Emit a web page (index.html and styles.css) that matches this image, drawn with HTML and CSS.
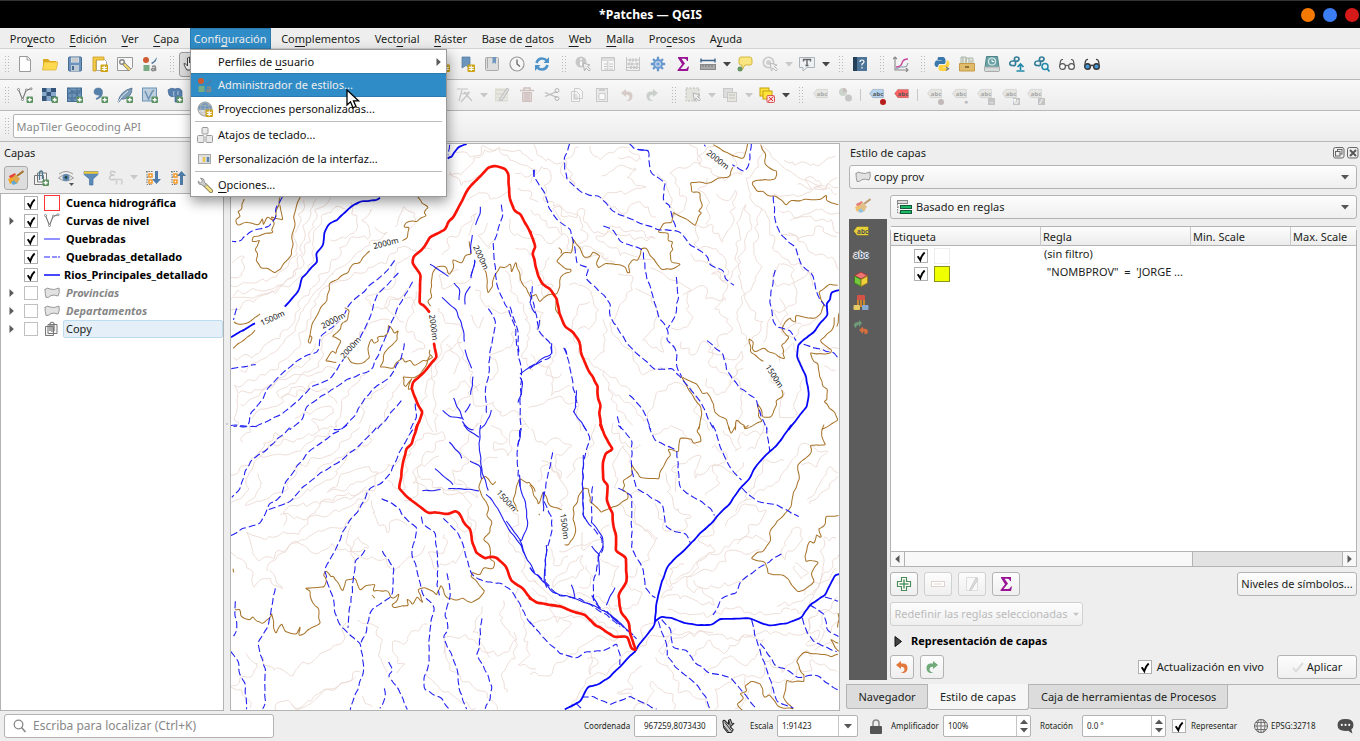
FILE: index.html
```html
<!DOCTYPE html>
<html lang="es">
<head>
<meta charset="utf-8">
<title>*Patches — QGIS</title>
<link rel="stylesheet" href="styles.css">
</head>
<body>
<svg class="defs" width="0" height="0" aria-hidden="true">
  <symbol id="new" viewBox="0 0 16 16"><path d="M2.500.5h8l3 3v12h-11z" fill="#fff" stroke="#999"/><path d="M10 .5V4h3.500" fill="none" stroke="#999"/></symbol>
  <symbol id="open" viewBox="0 0 16 16"><path d="M1 3h5l2 2h6v9H1z" fill="#dba91b"/><path d="M2 6h14l-2 8H.5z" fill="#fcd94f" stroke="#dcae2b" stroke-width=".7"/></symbol>
  <symbol id="save" viewBox="0 0 16 16"><rect x="1.500" y="1" width="13" height="14" rx="1" fill="#6b93bd" stroke="#456b91"/><rect x="4" y="1.500" width="8" height="5" fill="#e9edf1"/><path d="M4.500 3h7M4.500 5h7" stroke="#aaa"/><rect x="4" y="9" width="8" height="6" fill="#bdc9d4"/><path d="M6 10v4" stroke="#456b91" stroke-width="2"/></symbol>
  <symbol id="gold" viewBox="0 0 16 16"><rect x="8.500" y="8.500" width="7.500" height="7.500" rx="1" fill="#cda215"/><path d="M12.200 9.500v5.500M9.800 11l5 2.600M9.800 13.600l5-2.600" stroke="#fff" stroke-width="1.100"/></symbol>
  <symbol id="layout" viewBox="0 0 16 16"><path d="M4.500 3.500h8l2 2v9h-10z" fill="#fff" stroke="#aaa"/><path d="M1 1h11v3H4v11H1z" fill="#f4cc4c" stroke="#c99a1d" stroke-width=".8"/><use href="#gold"/></symbol>
  <symbol id="layoutmgr" viewBox="0 0 16 16"><path d="M.5 1.500h15v10l-3 3H.5z" fill="#f7f7f7" stroke="#999"/><path d="M6 7l7 7" stroke="#777" stroke-width="3.200"/><path d="M6 7l7 7" stroke="#f5d76a" stroke-width="2"/><circle cx="5" cy="6" r="2.300" fill="none" stroke="#888" stroke-width="1.400"/></symbol>
  <symbol id="style" viewBox="0 0 16 16"><circle cx="4" cy="4" r="3" fill="#cf5b31"/><path d="M15 1l-3 4-3 2 1.500 1L14 5z" fill="#51799e"/><rect x="1.500" y="9" width="6" height="6" fill="#79ab82"/><path d="M10 10.500q3.500-1.500 3.500 1V15M13.500 12.500q-4-.5-4 1.200 1.500 2.500 4-.4" fill="none" stroke="#888" stroke-width="1.500"/></symbol>
  <symbol id="globe" viewBox="0 0 16 16"><circle cx="8" cy="8" r="7" fill="#ddd" stroke="#999"/><path d="M1.500 6q6.500-9 13 0v3h-13z" fill="#7195b8"/><path d="M1 8h14M8 1v14M3 4q5 2 10 0M3 12q5-2 10 0M6 1.500q-5 6.500 0 13M10 1.500q5 6.500 0 13" fill="none" stroke="#bbb" stroke-width=".6"/></symbol>
  <symbol id="globegold" viewBox="0 0 16 16"><use href="#globe"/><use href="#gold"/></symbol>
  <symbol id="keys" viewBox="0 0 16 16"><g fill="#e9e9e9" stroke="#999"><rect x="5" y=".5" width="6" height="6.500" rx="1"/><rect x=".5" y="8.500" width="6.500" height="7" rx="1"/><rect x="9" y="8.500" width="6.500" height="7" rx="1"/></g></symbol>
  <symbol id="panel" viewBox="0 0 16 16"><rect x="1.500" y="3.500" width="12" height="9" fill="#ddd" stroke="#aaa"/><path d="M3.500 6v5" stroke="#eee" stroke-width="2"/><path d="M7 6v5" stroke="#ecc94d" stroke-width="2.500"/><path d="M11 6v5" stroke="#5b85ad" stroke-width="2.500"/></symbol>
  <symbol id="wrench" viewBox="0 0 16 16"><path d="M8 8l6 6" stroke="#76704c" stroke-width="4" stroke-linecap="round"/><path d="M8 8l6 6" stroke="#f1df85" stroke-width="2.500" stroke-linecap="round"/><path d="M1 4q0 4 4 4l3 1.500L9.500 8 7.500 5q0-4-4-4l2 3-2 2z" fill="#ccc" stroke="#888" stroke-width=".8"/></symbol>
  <symbol id="plusb" viewBox="0 0 16 16"><rect x="9.500" y="9.500" width="6.500" height="6.500" rx="1" fill="#5c9262"/><path d="M12.750 10.700v4M10.700 12.750h4" stroke="#fff" stroke-width="1.300"/></symbol>
  <symbol id="vec" viewBox="0 0 16 16"><path d="M1.500 2.500l4 10L9 3.500l4-1.500" fill="none" stroke="#777" stroke-width="1.100"/><g fill="#fff" stroke="#888"><circle cx="1.500" cy="2.500" r="1"/><circle cx="5.500" cy="12.500" r="1"/><circle cx="9.500" cy="3" r="1"/><circle cx="14" cy="1.800" r="1"/></g></symbol>
  <symbol id="vecadd" viewBox="0 0 16 16"><use href="#vec"/><use href="#plusb"/></symbol>
  <symbol id="raster" viewBox="0 0 16 16"><rect x="0" y="1" width="14" height="13" fill="#34567a"/><path d="M4.500 1H9v4H4.500zM9 5h5v4H9zM0 5h4.500v4H0zM4.500 9H9v5H4.500z" fill="#88a9ca"/><use href="#plusb"/></symbol>
  <symbol id="mesh" viewBox="0 0 16 16"><rect x=".5" y="1" width="14" height="13.500" fill="#7096bb" stroke="#446b91"/><path d="M.5 9L5 4l5 4 4.500-7M.5 9l5 5.500L10 8l4.500 4M1 1l4 3h9M0 6h14M0 11h14M5 4v10M10 1v7" fill="none" stroke="#446b91" stroke-width=".8"/><use href="#plusb"/></symbol>
  <symbol id="comma" viewBox="0 0 16 16"><path d="M2 5q0-4 4.500-4 4 0 4 4.500 0 5-6 7l-.5-1Q7.500 10 7.500 8 2 8.500 2 5z" fill="#5580aa" stroke="#426b94" stroke-width=".5"/><use href="#plusb"/></symbol>
  <symbol id="feather" viewBox="0 0 16 16"><path d="M1 15Q3 4 15 1q0 9-8 11H4l-2 3z" fill="#7e9db9" stroke="#47688a" stroke-width=".8"/><path d="M1 15q4-7 10-11" fill="none" stroke="#e9eef3"/><use href="#plusb"/></symbol>
  <symbol id="virt" viewBox="0 0 16 16"><rect x=".5" y="1" width="14" height="13" fill="#bdcfdf" stroke="#6d91b1"/><path d="M3 4l3.500 8L10 5l2-2" fill="none" stroke="#6d91b1" stroke-width="1.500"/><use href="#plusb"/></symbol>
  <symbol id="pg" viewBox="0 0 16 16"><path d="M1 3q3-3 7-1 5-2 7 2v5l-3 2-1 4H8V9q-4 2-6-1z" fill="#557fae" stroke="#3d638e" stroke-width=".7"/><path d="M7 4q-1 3 0 5M11 4v4" fill="none" stroke="#dbe5ef" stroke-width=".7"/><use href="#plusb"/></symbol>
  <symbol id="bookmark" viewBox="0 0 16 16"><path d="M3 1h8v11l-4-2.500L3 12z" fill="#6c95bd" stroke="#50789f" stroke-width=".7"/><use href="#gold"/></symbol>
  <symbol id="book" viewBox="0 0 16 16"><rect x="1.500" y="1.500" width="13" height="13" rx="1" fill="#ddd" stroke="#aaa"/><path d="M3.500 1.500v11" stroke="#aaa"/><path d="M8.500 1h3.500v7l-1.700-1.500L8.500 8z" fill="#6f97bf"/></symbol>
  <symbol id="clock" viewBox="0 0 16 16"><circle cx="8" cy="8" r="7" fill="#f7f7f7" stroke="#999" stroke-width="1.200"/><path d="M8 3.500V8l3 2.500" fill="none" stroke="#666" stroke-width="1.300"/></symbol>
  <symbol id="refresh" viewBox="0 0 16 16"><path d="M2.500 7Q4 2.500 8 2.500q3 0 4.500 2M13.500 9Q12 13.500 8 13.500q-3 0-4.500-2" fill="none" stroke="#4d93c9" stroke-width="2.700"/><path d="M15 1v6H9.500zM1 15V9h5.500z" fill="#4d93c9"/></symbol>
  <symbol id="ident" viewBox="0 0 16 16"><circle cx="6" cy="6" r="5.500" fill="#c8c8c8"/><path d="M6 5.500v4M6 2.500v1.500" stroke="#fff" stroke-width="1.800"/><path d="M8 7l1.500 8 1.500-3 3 3 1.500-1.500-3-3L15 9z" fill="#eee" stroke="#b5b5b5"/></symbol>
  <symbol id="table" viewBox="0 0 16 16"><path d="M1.500 1.500h13v13h-13z" fill="#f7f7f7" stroke="#c5c5c5"/><path d="M2 2h12v3H2z" fill="#ddd"/><path d="M4 8h3M9 8h4M4 10.500h3M9 10.500h4M4 13h3M9 13h4M7.800 5v9" stroke="#c5c5c5"/></symbol>
  <symbol id="abacus" viewBox="0 0 16 16"><path d="M1.500 1v14M14.500 1v14M1 14.500h14M2 4h12M2 8h12M2 11.500h12" stroke="#c5c5c5"/><path d="M5 2.500v3M8 2.500v3M11 2.500v3M4 6.500v3M7 6.500v3M12 6.500v3M6 10v3M9 10v3M11.500 10v3" stroke="#c8c8c8" stroke-width="1.800"/></symbol>
  <symbol id="gear" viewBox="0 0 16 16"><path d="M8 .8v14.400M.8 8h14.400M3 3l10 10M13 3L3 13" stroke="#6597cc" stroke-width="2.300"/><circle cx="8" cy="8" r="5" fill="#6b9bcf"/><circle cx="8" cy="8" r="3" fill="#b7cfea"/><circle cx="8" cy="8" r="1.500" fill="#6b9bcf"/></symbol>
  <symbol id="sigma" viewBox="0 0 16 16"><path d="M3 1h10v4h-1q-.5-2.300-2.500-2.300H6.500L10 7.500 5.500 13H10q2 0 3-2.500h1L13 15H2.500v-1L7 8.300 3 2z" fill="#991495"/></symbol>
  <symbol id="measure" viewBox="0 0 16 16"><path d="M1 4.500h14M1 2.500v4M15 2.500v4" stroke="#3e6488" stroke-width="1.400"/><rect x=".5" y="8.500" width="15" height="5" fill="#aaa" stroke="#888"/><path d="M3 9v2M6 9v2M9 9v2M12 9v2" stroke="#777"/></symbol>
  <symbol id="tip" viewBox="0 0 16 16"><path d="M4 1h9q2 0 2 3v3q0 2-2 2H8l-3 5V9H4Q2 9 2 7V4q0-3 2-3z" fill="#f9e680" stroke="#d4b640"/><circle cx="3" cy="13" r="2.500" fill="#689666"/></symbol>
  <symbol id="action" viewBox="0 0 16 16"><circle cx="6.500" cy="6.500" r="5.200" fill="none" stroke="#c8c8c8" stroke-width="1.600"/><circle cx="6.500" cy="6.500" r="2.500" fill="#d0d0d0"/><path d="M8 7l1.500 8 1.500-3 3 3 1.500-1.500-3-3L15 9z" fill="#eee" stroke="#bbb"/></symbol>
  <symbol id="textann" viewBox="0 0 16 16"><path d="M.5 1.500h15v10H8L4 15v-3.500H.5z" fill="#edf1f4" stroke="#aab3bb"/><path d="M4.500 5.500v-2h7v2M8 3.500v6M6.500 9.500h3" fill="none" stroke="#666" stroke-width="1.400"/></symbol>
  <symbol id="help" viewBox="0 0 16 16"><rect x="1" y="1" width="14" height="14" fill="#4d7398"/><path d="M1 1h4v14H1z" fill="#243f5a"/><path d="M8 6q0-2 2-2t2 2q0 1-2 2v1.500M10 11v1.500" fill="none" stroke="#fff" stroke-width="1.200"/></symbol>
  <symbol id="plot" viewBox="0 0 16 16"><path d="M2 1v13h13M0 3l2-2 2 2M13 12l2 2-2 2" fill="none" stroke="#888" stroke-width="1.100"/><path d="M3 11q5 0 6-4t6-4" fill="none" stroke="#c74b9d" stroke-width="1.300"/><path d="M3 13q5-3 8-2t4-4" fill="none" stroke="#7d98aa"/></symbol>
  <symbol id="python" viewBox="0 0 16 16"><path d="M4.500 1h5q2 1 2 3v2.500q0 1.500-2 1.500H5L3.500 11H2Q-1 8 2 4.500h5.500V4h-4q0-3 1-3z" fill="#3a78ab"/><path d="M11 15H6.500q-2-1-2-2.500V11q0-2 2-2h4q2 0 2-2V4.500h1.500q3 3 0 7H9v.5h4q0 3-2 3z" fill="#ffd23f"/><path d="M12 11l2.500 1.700-2.500 1.800" fill="none" stroke="#777" stroke-width="1.300"/></symbol>
  <symbol id="archive" viewBox="0 0 16 16"><path d="M2 1h5v9H2zM7 2h7v8H7z" fill="#ececdf" stroke="#a9b4a8"/><path d="M4 1v7M10 2v6M12 4v4" stroke="#9fb0ad"/><path d="M.5 7.500h15v7.500H.5z" fill="#dfbb6b" stroke="#c69a45"/><path d="M6 11h4" stroke="#765a22" stroke-width="1.500"/></symbol>
  <symbol id="disk" viewBox="0 0 16 16"><path d="M2.500.5h11l1.500 11H1z" fill="#69a1a4" stroke="#4e8488"/><rect x=".5" y="11" width="15" height="4.500" rx="1" fill="#d7dada" stroke="#aaa"/><circle cx="8" cy="5.500" r="3.500" fill="none" stroke="#d8e8e8" stroke-width="1.200"/><path d="M8 3.500v2h2" stroke="#fff" fill="none"/></symbol>
  <symbol id="snake" viewBox="0 0 16 16"><path d="M3.500 9.500Q.5 9.500.8 7q.4-2 2.700-2h3v3.200q0 1.800-3 1.300M5.500 5V2.500Q5.800 1 7.500 1q2.500 0 2.500 2t-3 2.500" fill="none" stroke="#327d98" stroke-width="1.700"/></symbol>
  <symbol id="pyup" viewBox="0 0 16 16"><use href="#snake"/><path d="M11.500 14V9M8.500 11l3-3 3 3M7.500 15h8" fill="none" stroke="#2288aa" stroke-width="1.700"/></symbol>
  <symbol id="pyfind" viewBox="0 0 16 16"><use href="#snake"/><circle cx="11" cy="10.500" r="3" fill="#e8f3f6" stroke="#2288aa" stroke-width="1.500"/><path d="M13 12.500l2.500 3" stroke="#2288aa" stroke-width="1.800"/></symbol>
  <symbol id="glass" viewBox="0 0 16 16"><circle cx="3.500" cy="10.500" r="2.900" fill="#f8f8f8" stroke="#555" stroke-width="1.200"/><circle cx="12.500" cy="10.500" r="2.900" fill="#f8f8f8" stroke="#555" stroke-width="1.200"/><path d="M6.500 10q1.500-1.500 3 0M1 9q0-6 3-5.500M15 9q0-6-3-5.500" fill="none" stroke="#555" stroke-width="1.100"/></symbol>
  <symbol id="glassblue" viewBox="0 0 16 16"><circle cx="3.500" cy="10.500" r="2.800" fill="#4697d5" stroke="#333" stroke-width="1.400"/><circle cx="12.500" cy="10.500" r="2.800" fill="#4697d5" stroke="#333" stroke-width="1.400"/><path d="M6.500 10q1.500-1.500 3 0M1 9q0-6 3-5.500M15 9q0-6-3-5.500" fill="none" stroke="#444" stroke-width="1.300"/></symbol>
  <symbol id="hand" viewBox="0 0 16 16"><path d="M4 14Q0 8 1.500 7l3 3V2q1.500-1 2 0v5-6q1.500-1 2 0v6-5q1.500-1 2 0v6-4q1.500-1 2 0v6l-1 4z" fill="#fff" stroke="#444"/></symbol>
  <symbol id="vertex" viewBox="0 0 16 16"><path d="M0 2h11M2 14L5 3M5 7l8-2M7 5l8 9M4 15l8-9" fill="none" stroke="#c4c4c4" stroke-width="1.200"/></symbol>
  <symbol id="multiedit" viewBox="0 0 16 16"><path d="M1 1.500h13v13H1z" fill="#dcdcd3"/><path d="M2 5h12M2 9h12M2 12h12" stroke="#f1f1f1"/><path d="M5 13L13 1l2 1.500-7 11z" fill="#ddd" stroke="#bfbfbf"/></symbol>
  <symbol id="trash" viewBox="0 0 16 16"><path d="M1 3.500h14M5 3V1h6v2" fill="none" stroke="#cfc0be" stroke-width="1.500"/><path d="M3.500 5.500h9v9h-9z" fill="#e2d6d4" stroke="#cfc0be"/><path d="M6 6v8M8 6v8M10 6v8" stroke="#c9bab8"/></symbol>
  <symbol id="cut" viewBox="0 0 16 16"><path d="M1 5.500l12 5M1 9.500l12-5" stroke="#bbb" stroke-width="1.300"/><circle cx="13" cy="3.500" r="2" fill="none" stroke="#b5b5b5"/><circle cx="13" cy="11.500" r="2" fill="none" stroke="#b5b5b5"/></symbol>
  <symbol id="copy" viewBox="0 0 16 16"><path d="M5.500 1.500h5l3 3v7h-8zM2.500 4.500h5l3 3v7h-8z" fill="#f5f5f5" stroke="#ccc"/><path d="M4 8h4M4 10h5M4 12h5" stroke="#ccc"/></symbol>
  <symbol id="paste" viewBox="0 0 16 16"><rect x="2.500" y="1.500" width="11" height="13" fill="#eaeaea" stroke="#c9c9c9"/><path d="M5 1h6v3H5z" fill="#ccc"/><path d="M5 6.500h6v6H5z" fill="#fafafa" stroke="#ccc"/></symbol>
  <symbol id="undo" viewBox="0 0 16 16"><path d="M2 6l5-4V4.500h2q4.500 0 4.500 4.500 0 4-3.500 5H6.500Q11 12.500 10.500 10T7 7.800V10z" fill="currentColor"/></symbol>
  <symbol id="redo" viewBox="0 0 16 16"><path d="M14 6L9 2V4.500H7Q2.500 4.500 2.500 9q0 4 3.500 5h3.500Q5 12.500 5.500 10T9 7.800V10z" fill="currentColor"/></symbol>
  <symbol id="selrect" viewBox="0 0 16 16"><rect x="1" y="1" width="13" height="13" fill="#e3e3dd" stroke="#bcbcbc" stroke-dasharray="2 1.500"/><path d="M8 6l1.500 8 1.500-3 3 3 1.500-1.500-3-3L15 8z" fill="#eee" stroke="#b5b5b5"/></symbol>
  <symbol id="selform" viewBox="0 0 16 16"><rect x="1.500" y="1.500" width="9" height="9" fill="#ddd" stroke="#c9c9c9"/><rect x="5.500" y="5.500" width="9" height="9" fill="#e6e6dd" stroke="#c9c9c9"/><path d="M7 8h6M7 11h6" stroke="#ccc" stroke-width="1.500"/></symbol>
  <symbol id="desel" viewBox="0 0 16 16"><rect x="1" y="1" width="9" height="8" fill="#ffe53a" stroke="#c49e10"/><rect x="4" y="4" width="9" height="8" fill="#ffe53a" stroke="#c49e10"/><rect x="8" y="8.500" width="7.500" height="7" rx="1" fill="#f7dddd" stroke="#d95757"/><path d="M9 14.500l5.500-5M10 10l4 4" stroke="#d33"/></symbol>
  <symbol id="diag" viewBox="0 0 16 16"><circle cx="6" cy="5" r="4" fill="#ccd4cc"/><path d="M6 1a4 4 0 0 1 4 4H6z" fill="#c9bebe"/><circle cx="11.500" cy="11" r="3.500" fill="#c6c6c6"/></symbol>
  <symbol id="paint" viewBox="0 0 16 16"><path d="M1 6l6-3 3 6-6 4z" fill="#e4433b"/><path d="M0 9l5-2 3 4-6 3z" fill="#f5a823"/><path d="M3 12l5-3 2 4-5 2z" fill="#60a8d4"/><path d="M15.500 1L9 6" stroke="#a4732d" stroke-width="2"/><path d="M7 4.500l5 4-3 5-5-5z" fill="#dda94e"/></symbol>
  <symbol id="addgroup" viewBox="0 0 16 16"><path d="M1.500 5.500h9v9h-9zM4.500 3h9v9h-9z" fill="#f4f4f4" stroke="#777"/><path d="M6.500 10V2q2-2 3 0v7" fill="none" stroke="#4d7891" stroke-width="1.300"/><use href="#plusb"/></symbol>
  <symbol id="eye" viewBox="0 0 16 16"><path d="M.5 8Q8 1 15.500 8 8 14 .5 8z" fill="#e6e6e6" stroke="#999"/><circle cx="8" cy="7.500" r="3.500" fill="#5e88b2"/><circle cx="8" cy="7.500" r="1.400" fill="#244"/><path d="M1 4q7-5 14 0" fill="none" stroke="#999"/><path d="M11 13h5l-2.500 3z" fill="#555"/></symbol>
  <symbol id="funnel" viewBox="0 0 16 16"><path d="M1 1.500h14v3L10 9v6H6.500V9L1 4.500z" fill="#5c8bb7" stroke="#45749f" stroke-width=".7"/><path d="M1 1.500h14v2.200H1z" fill="#f4c936"/></symbol>
  <symbol id="eps" viewBox="0 0 16 16"><path d="M7.500 2.500Q2 0 2.500 3q0 2 4 2-5 0-5 3 .5 3 6 1" fill="none" stroke="#c9c9c9" stroke-width="1.500"/><path d="M8.500 9.500v5M8 9.500h5.500q1 3 0 5" fill="none" stroke="#d0d0d0" stroke-width="1.700"/></symbol>
  <symbol id="down" viewBox="0 0 16 16"><path d="M1 1.500h7M2 1.500v13h5M2 7h4" stroke="#777" fill="none" stroke-dasharray="1.500 1"/><path d="M4 4h3v3H4zM4 10h3v3H4z" fill="#fff" stroke="#f49b29" stroke-width="1.500"/><path d="M10 1h3v8h3l-4.500 5L7 9h3z" fill="#4f7dab"/></symbol>
  <symbol id="up" viewBox="0 0 16 16"><path d="M1 1.500h7M2 1.500v13h5M2 7h4" stroke="#777" fill="none" stroke-dasharray="1.500 1"/><path d="M4 4h3v3H4zM4 10h3v3H4z" fill="#fff" stroke="#f49b29" stroke-width="1.500"/><path d="M10 15h3V6h3l-4.500-5L7 6h3z" fill="#4f7dab"/></symbol>
  <symbol id="poly" viewBox="0 0 16 12"><path d="M1 2.500Q3 0 6 2q4 1.500 9-1 1 5-1 8-4-1.500-7-.5-2 2.500-5 2-1-4-1-8.500z" fill="#e2e2e2" stroke="#999"/></symbol>
  <symbol id="group" viewBox="0 0 16 16"><path d="M1.500 5.500h8v9h-8zM4 3.500h9v9H4z" fill="#f4f4f4" stroke="#777"/><path d="M6 10V2.500q2-2.500 4 0V10M8 4v7" fill="none" stroke="#777" stroke-width="1.200"/></symbol>
  <symbol id="check" viewBox="0 0 14 14"><rect x=".5" y=".5" width="13" height="13" fill="#fff" stroke="#b0b0b0"/><path d="M3.700 7.200l2.600 3.900q1.300-4.900 4.400-7.600" fill="none" stroke="#000" stroke-width="1.900"/></symbol>
  <symbol id="nocheck" viewBox="0 0 14 14"><rect x=".5" y=".5" width="13" height="13" fill="#fff" stroke="#c0c0c0"/></symbol>
  <symbol id="rules" viewBox="0 0 16 16"><rect x="1.500" y="1.500" width="10" height="3" fill="#ddd" stroke="#888"/><path d="M1.500 5v9h3M1.500 8h3" fill="none" stroke="#888" stroke-dasharray="1.500 1"/><rect x="4.500" y="6.500" width="11" height="3" fill="#18b864" stroke="#17583a"/><rect x="4.500" y="11.500" width="11" height="3" fill="#18b864" stroke="#17583a"/></symbol>
  <symbol id="cube" viewBox="0 0 16 16"><path d="M8 1l6.500 3.500L8 8 1.500 4.500z" fill="#f77" stroke="#a33"/><path d="M1.500 5L8 8.500v7L1.500 12z" fill="#78d438" stroke="#3b861a"/><path d="M14.500 5L8 8.500v7l6.500-3.500z" fill="#ffdf37" stroke="#a6821d"/></symbol>
  <symbol id="diagram" viewBox="0 0 16 16"><path d="M5 3v8M11 3v8M8 4v8" stroke="#d58a2b" stroke-width="2"/><rect x="4" y="0" width="8" height="5" rx="1" fill="#df5143"/><rect x=".5" y="10" width="6.500" height="5" rx="1" fill="#f6d767"/><rect x="9" y="10" width="6.500" height="5" rx="1" fill="#8eb4dd"/></symbol>
  <symbol id="history" viewBox="0 0 16 16"><path d="M9 4L6 1v2Q1 3 1 6q0 2 2 3 0-3 3-3v2z" fill="#72a27d"/><path d="M6 11l4-3.500V9.500q5 0 5 3T11 15q2-2-1-2.500V15z" fill="#e0713b"/></symbol>
  <symbol id="bigplus" viewBox="0 0 16 16"><path d="M5.500 1.500h5v4h4v5h-4v4h-5v-4h-4v-5h4z" fill="#fff" stroke="#4f8b57" stroke-width="1.200"/><path d="M8 3.500v9M3.500 8h9" stroke="#60976a" stroke-width="1.600"/></symbol>
  <symbol id="tag" viewBox="0 0 16 12"><path d="M.5 6L4 1.500h11.500v9H4z" fill="currentColor" stroke="#0003"/><text x="4" y="8.500" class="tag-text">abc</text></symbol>
  <symbol id="arrow" viewBox="0 0 8 5"><path d="M0 0h8L4 4.500z" fill="currentColor"/></symbol>
  <symbol id="tri" viewBox="0 0 5 8"><path d="M.5 0v8L4.800 4z" fill="#5a5a5a"/></symbol>
</svg>

<header class="titlebar"><span class="title">*Patches — QGIS</span><span class="winbtns"><i class="orange"></i><i class="blue"></i><i class="red"></i></span></header>

<nav class="menubar">
  <span>Pro<u>y</u>ecto</span><span><u>E</u>dición</span><span><u>V</u>er</span><span><u>C</u>apa</span><span class="active">Confi<u>g</u>uración</span><span>Co<u>m</u>plementos</span><span>Vect<u>o</u>rial</span><span><u>R</u>áster</span><span>Base de <u>d</u>atos</span><span><u>W</u>eb</span><span><u>M</u>alla</span><span>Pro<u>c</u>esos</span><span>A<u>y</u>uda</span>
</nav>

<div class="toolbar">
  <b class="grip first"></b>
  <i><svg><use href="#new"/></svg></i><i><svg><use href="#open"/></svg></i><i><svg><use href="#save"/></svg></i><i><svg><use href="#layout"/></svg></i><i><svg><use href="#layoutmgr"/></svg></i><i><svg><use href="#style"/></svg></i>
  <b class="grip"></b>
  <i class="pressed"><svg><use href="#hand"/></svg></i>
  <b class="rest r1"></b>
  <i><svg><use href="#bookmark"/></svg></i><i><svg><use href="#bookmark"/></svg></i><i><svg><use href="#book"/></svg></i><i><svg><use href="#clock"/></svg></i><i><svg><use href="#refresh"/></svg></i>
  <b class="grip"></b>
  <i><svg><use href="#ident"/></svg></i><i><svg><use href="#table"/></svg></i><i><svg><use href="#abacus"/></svg></i><i><svg><use href="#gear"/></svg></i><i><svg><use href="#sigma"/></svg></i><i><svg><use href="#measure"/></svg></i><em><svg><use href="#arrow"/></svg></em>
  <i><svg><use href="#tip"/></svg></i><i><svg><use href="#action"/></svg></i><em class="off"><svg><use href="#arrow"/></svg></em><i><svg><use href="#textann"/></svg></i><em><svg><use href="#arrow"/></svg></em>
  <b class="grip"></b><i><svg><use href="#help"/></svg></i><b class="grip"></b><i><svg><use href="#plot"/></svg></i><b class="grip"></b>
  <i><svg><use href="#python"/></svg></i><i><svg><use href="#archive"/></svg></i><i><svg><use href="#disk"/></svg></i><i><svg><use href="#pyup"/></svg></i><i><svg><use href="#pyfind"/></svg></i><i><svg><use href="#glass"/></svg></i><i><svg><use href="#glassblue"/></svg></i>
</div>

<div class="toolbar">
  <b class="grip first"></b>
  <i><svg><use href="#vecadd"/></svg></i><i><svg><use href="#raster"/></svg></i><i><svg><use href="#mesh"/></svg></i><i><svg><use href="#comma"/></svg></i><i><svg><use href="#feather"/></svg></i><i><svg><use href="#virt"/></svg></i><i><svg><use href="#pg"/></svg></i>
  <b class="rest r2"></b>
  <i><svg><use href="#vertex"/></svg></i><em class="off"><svg><use href="#arrow"/></svg></em>
  <i><svg><use href="#multiedit"/></svg></i><i><svg><use href="#trash"/></svg></i><i><svg><use href="#cut"/></svg></i><i><svg><use href="#copy"/></svg></i><i><svg><use href="#paste"/></svg></i><i class="brownish"><svg><use href="#undo"/></svg></i><i class="greenish"><svg><use href="#redo"/></svg></i>
  <b class="grip"></b>
  <i><svg><use href="#selrect"/></svg></i><em class="off"><svg><use href="#arrow"/></svg></em><i><svg><use href="#selform"/></svg></i><em class="off"><svg><use href="#arrow"/></svg></em><i><svg><use href="#desel"/></svg></i><em><svg><use href="#arrow"/></svg></em>
  <b class="grip"></b>
  <i class="tag"><svg><use href="#tag"/></svg></i><i><svg><use href="#diag"/></svg></i><b class="vsep narrow"></b>
  <i class="tag bluetag"><svg><use href="#tag"/></svg><s class="dot"></s></i><i class="tag redtag"><svg><use href="#tag"/></svg></i><b class="vsep"></b>
  <i class="tag"><svg><use href="#tag"/></svg><s class="dot gray"></s></i><i class="tag"><svg><use href="#tag"/></svg><s class="mark">●</s></i><i class="tag"><svg><use href="#tag"/></svg><s class="mark box">→</s></i><i class="tag"><svg><use href="#tag"/></svg><s class="mark box">↻</s></i><i class="tag"><svg><use href="#tag"/></svg><s class="mark box">⁄</s></i>
</div>

<div class="toolbar"><b class="grip first"></b><div class="geocode">MapTiler Geocoding API</div></div>

<main>
  <section class="layers">
    <h2>Capas</h2>
    <div class="layertools">
      <i class="pressed2"><svg><use href="#paint"/></svg></i><i><svg><use href="#addgroup"/></svg></i><i><svg><use href="#eye"/></svg></i><i><svg><use href="#funnel"/></svg></i><i><svg><use href="#eps"/></svg></i><em class="off"><svg><use href="#arrow"/></svg></em><i class="dn"><svg><use href="#down"/></svg></i><i><svg><use href="#up"/></svg></i>
    </div>
    <ul class="tree">
      <li><i></i><svg class="cb"><use href="#check"/></svg><span class="sym"><b class="redbox"></b></span><strong>Cuenca hidrográfica</strong></li>
      <li><i><svg><use href="#tri"/></svg></i><svg class="cb"><use href="#check"/></svg><span class="sym"><svg class="s16"><use href="#vec"/></svg></span><strong>Curvas de nivel</strong></li>
      <li><i></i><svg class="cb"><use href="#check"/></svg><span class="sym"><b class="line l1"></b></span><strong>Quebradas</strong></li>
      <li><i></i><svg class="cb"><use href="#check"/></svg><span class="sym"><b class="line l2"></b></span><strong>Quebradas_detallado</strong></li>
      <li><i></i><svg class="cb"><use href="#check"/></svg><span class="sym narrow"><b class="line l3"></b></span><strong>Rios_Principales_detallado</strong></li>
      <li><i><svg><use href="#tri"/></svg></i><svg class="cb"><use href="#nocheck"/></svg><span class="sym"><svg class="poly"><use href="#poly"/></svg></span><strong class="dim">Provincias</strong></li>
      <li><i><svg><use href="#tri"/></svg></i><svg class="cb"><use href="#nocheck"/></svg><span class="sym"><svg class="poly"><use href="#poly"/></svg></span><strong class="dim">Departamentos</strong></li>
      <li><i><svg><use href="#tri"/></svg></i><svg class="cb"><use href="#nocheck"/></svg><span class="sym copysym"><svg class="s16"><use href="#group"/></svg></span><span class="sel">Copy</span></li>
    </ul>
  </section>
  <div class="split"></div>
  <section class="mapframe">
    <svg class="map" viewBox="231 144 608 566">
      <g class="faint">
        <g transform="translate(230 140) scale(.33333)">
          <path d="M225 175L200 260 195 350 130 420 0 435M260 175L225 260 210 350 200 400 130 445 0 460M300 175L260 215 240 280 215 380 120 460 0 480M340 200L290 215 250 300 245 380 180 440 60 480 0 520M430 210L400 230 425 290 345 300 320 360 270 410 215 480 180 560 80 640 0 660M440 270L470 280 430 300 370 350 330 380 265 450 215 510 200 570 130 640 30 700M600 330L500 325 460 370 330 420 270 450 245 520 210 590 190 640 120 700 20 740 20 870M540 340L500 370 490 430 400 480 430 510 480 490 540 440M520 540L480 520 460 490 520 460 560 490M0 370L40 345 40 410 0 420M330 550L280 600 270 680 160 720 30 800M250 620L240 660 110 740 30 760M310 680L240 700 130 760 190 770 260 730M390 600L370 620 400 570 450 540 480 540M70 830L150 790 180 740 280 750 320 790M200 830L280 800 320 820 240 850 270 870M420 690L350 760 320 860M470 720L400 790 390 850M530 700L480 770 450 860M680 40L730 50 760 20 840 30 910 60M660 95L690 110 750 40 800 30 915 90M740 110L690 130 660 90M850 100L890 110 915 90M720 190L750 150 790 180 830 150M870 150L900 160 915 190M640 350L660 300 710 250 740 210 720 280M770 250L740 290 770 330 790 300M830 240L850 280 915 300M860 330L910 340M680 390L630 400 640 440 690 430 730 420M630 500L640 540 690 560 690 620 720 700 740 760M720 520L740 560 760 540M740 440L760 500 850 530 850 620 780 640 810 690 780 730M830 400L850 460 880 510 900 570 880 640 915 700M650 590L600 690 590 760 570 800 600 870M700 600L630 660 610 720 620 870M660 760L700 720 730 750 730 800 790 790 820 830 860 810 900 860M640 820L690 800 740 730M760 830L740 870M560 460L530 560 590 620 550 640M500 270L520 200 560 220 540 270M370 190L380 280 310 300M915 430L870 420 870 380M670 700L690 660 650 610"/>
        </g>
        <g transform="translate(530 140) scale(.33333)">
          <path d="M20 15L30 50 95 70 100 110 130 140 110 60 150 15M0 120L30 80 60 100 40 170 90 200 110 240 160 210 180 270 380 300 310 270 240 260 200 300 270 340 370 360M170 15L200 60 290 20M210 110L270 75 330 95 290 110 350 140 210 170 280 220 330 180 370 230M270 50L340 60 300 30M430 100L470 80 520 60 480 10M430 100L450 150 470 190 440 230 410 140 380 100M550 20L500 60 580 120 630 100 610 50 650 30M560 160L590 180 620 150 600 270 570 310 550 260 500 260 500 330 570 320 600 400 550 400 590 430 620 380 630 220 650 190 660 270 620 380 640 440 620 560 650 600M700 15L690 80 650 120 660 180 690 220 670 330 690 380 650 480 700 560 640 620M700 200L720 270 740 330 790 370 840 390 850 440M760 60L850 80 915 40M710 20L760 90 840 130 925 140M800 130L840 150 830 110 870 120 860 160 925 110M730 160L790 170 870 140 925 160M780 240L840 210 925 220M750 210L800 230 900 240 925 280M760 280L830 300 860 260 925 300M780 280L850 340 900 350 925 380M540 110L510 140 540 190 530 260M0 210L40 250 100 280 70 200 140 220 170 300 140 310 160 350 240 350M0 270L60 310 100 280 120 330 180 320 260 370M20 430L70 440 40 470 30 400 60 350M170 480L140 510 120 580 160 650 200 690 240 700 270 730 300 760M120 430L180 450 200 500 190 560 150 570M270 400L310 420 290 470 240 540 250 590 310 640 330 700 410 680M320 450L370 470 380 550 340 600 400 640 400 590M370 380L430 420 480 440 470 510 490 550 430 570M480 350L550 370 590 440 560 500 610 570 570 590 540 670 590 710 640 680M450 470L520 440 540 480 590 480M450 610L490 650 530 600 540 640 600 660 640 640 600 740M520 720L570 770 620 720 640 780 620 860M740 370L730 430 790 440 790 390 750 370M850 390L800 430 790 500 730 520 700 610M750 480L770 520 740 560 790 590 810 560 860 540M720 700L760 770 740 830 790 840 820 700 790 610 740 660M230 740L270 770 310 790 340 850 380 760 440 730 490 740 500 830 540 870M120 740L60 760 70 690 0 650M150 870L140 790 80 770 0 800M220 540L230 620 200 660M880 680L925 700M810 550L770 570 730 520M860 630L925 620M0 500L40 530 20 590 60 600 80 640 50 700 90 710M300 850L250 790 220 700"/>
        </g>
        <g transform="translate(230 425) scale(.33333)">
          <path d="M30 60L60 0M10 150L60 110 130 30 160 30 90 90 180 90 300 20M0 250L50 200 60 130 130 60 200 40 330 0M80 150L100 190 50 240 160 200 200 130 310 80 390 10M250 140L350 90 420 50 420 0M170 230L240 190 300 170 350 90M300 200L340 150 420 120 440 150 380 180 300 200M160 300L170 250 310 220 440 190 430 160 530 90M160 270L240 280 260 240 360 220 400 190M60 330L90 340 150 330 210 320 240 280 350 250 420 200M110 430L130 410 170 370 210 350 290 310 330 310 420 210M120 430L160 490 100 460 70 480 60 430 0 380M60 330L70 400 120 400 200 350 220 370 260 390 300 360 340 370M360 310L350 360 400 400 460 400 490 440 530 400 580 370M420 230L440 290 470 320 490 280 540 300M570 150L640 200 680 210 720 230 710 260 740 350M620 100L550 140 550 180 740 210 690 170M470 170L520 190 540 60 600 20 650 30 570 100 560 210 520 230M740 0L690 80 720 110 660 150 690 180M700 100L760 110 800 100M790 0L840 40 780 60 840 90 840 20 880 0M830 230L870 290 830 330 850 380 890 400 870 440 915 480M640 320L650 380 600 390 610 430 680 410 700 360M380 590L410 600 430 590 450 640 450 700 480 750M350 600L330 660 270 680 240 710 200 730 190 760 160 740 130 730 90 700M50 680L90 730 10 780M60 853L40 800 0 780M130 853L170 820 200 850 260 810 350 770 390 740M180 840L220 850 290 800 380 760M590 600L530 620 540 650 490 650 490 690 520 720 500 740M640 680L650 640 710 630 760 680 830 690 860 620M820 530L810 590 850 630 860 700 810 750 830 810M860 490L880 610 900 680 860 720 915 730M590 740L640 800 700 830 740 853M640 660L650 710 700 770 770 800 800 853M760 550L730 610 770 690M390 820L420 853M720 270L740 320 690 320 660 260M370 420L370 330 420 370 350 380"/>
        </g>
        <g transform="translate(530 425) scale(.33333)">
          <path d="M0 10L30 60 90 40 130 70 80 100 90 160 50 110 20 170M120 150L140 110 170 100 200 0M240 0L300 70 340 60M310 120L280 60 250 130 260 190M370 30L430 0 500 60M440 200L430 120 510 90 490 160 600 100 540 60M520 220L570 180 550 120 610 150 640 120M580 20L620 80 640 70 620 30 720 20M700 0L680 60 650 80M760 100L700 110 690 160 640 230M810 120L860 120 900 80 820 60 730 190 690 190 620 260M840 220L870 170 900 130 925 140M830 240L890 200 925 150M560 270L550 320 510 350 560 370 440 460M590 300L650 240 710 260 640 330 580 370 510 400 500 440 430 470M630 350L670 330 710 350M680 380L600 380 560 430 470 460 480 500 580 480 640 460M490 470L560 540 420 510 390 520 430 490 390 440M420 560L540 570 620 550 700 570 780 550M370 590L340 620 320 680 370 640 480 620 620 640 720 620 810 630 850 580M430 610L390 670 400 690 420 640 540 620M300 680L240 740 180 760 120 853M190 690L170 750 200 710 180 700M340 720L290 760 310 790 260 800 340 830M370 700L430 740 450 800 530 820 540 853M520 750L600 690 640 720 690 690 700 640 640 640 580 680 540 650 480 700M640 760L710 750 700 700 770 740 820 670 840 700M720 810L720 770 780 770 800 730 840 740 850 710 925 740M620 853L660 810 630 740 560 800 560 853M440 853L430 810 360 770 370 820 300 853M0 490L60 530 120 550 190 580 250 620 290 640M20 470L90 540 50 550 80 590 140 570 210 600M0 600L80 570 130 600 70 640M0 740L40 760 140 680 200 640 280 640M110 500L200 520 260 560M260 600L240 560 160 520M60 480L150 450 160 390 110 430 60 480M170 420L190 470 150 490M210 400L260 420 250 490M320 430L280 480 340 510 320 540 260 550M330 420L360 390 380 340 340 310 270 240M470 420L420 430 430 480M410 150L430 250 480 270 460 320 400 320 390 270 370 240M330 200L300 210 320 290 370 340M150 330L160 370 210 340 230 300M90 380L140 360 180 350M60 360L70 420 110 400M40 100L110 190 80 260M760 400L820 340 800 300 760 350 760 400M790 420L810 460 830 440 800 410M925 340L880 340 880 400 870 480 820 530 740 540M925 430L860 490 830 560 780 560M925 380L900 440 820 500M925 560L860 560 820 620 870 620 830 660 925 660M925 520L870 590 880 640 860 680M925 590L900 620"/>
        </g>
      </g>
      <g class="contour">
        <g transform="translate(230 140) scale(.33333)">
          <path d="M45 175L35 195 38 205 25 215 30 230 18 240 20 255 60 245 85 257 95 235 100 255 112 232 130 242 140 215 148 190 150 172M150 195L155 222 160 240 122 230 135 250 122 268 130 275 72 290 65 305 90 300 75 330 82 340 78 360 92 382 115 385 135 398 150 390 160 370 185 345 188 300 185 280 195 255 190 230 210 172M565 172L575 190 597 202 580 218 590 225 560 245 530 245 520 260 537 265 532 295 515 300M420 335L400 350 390 368 370 372 355 395 300 430 290 480 275 500 255 530 245 560 240 580 235 605 242 613 245 590 240 585M12 545L30 553 50 550 90 520M75 570L55 590 45 600 30 605 8 625M345 505L360 510 350 540 335 550 330 570 305 590 332 600 318 640 310 632 285 660 320 668M355 650L360 668 400 670 420 650 412 625 425 595 430 610 445 605 443 592 465 590 472 580 478 552 495 580 505 570 500 600 460 640 460 660 450 680 470 682 490 685 515 650 525 670 545 660 555 678 578 660 590 665 610 650 597 640 600 630M600 500L595 480 605 470 602 430 608 400 620 380 650 378 655 400 662 405 670 380 670 360 695 368 705 345 722 342 718 305M765 390L770 400 770 440 775 460 790 440 785 425 810 380 830 380 840 370 845 395 855 365 870 410 880 440 890 445 905 480M652 55L665 50M602 645L590 670 575 700 550 715 520 710 520 735 530 740 545 715 535 748 548 745"/>
        </g>
        <g transform="translate(530 140) scale(.33333)">
          <path d="M550 15L600 45 640 55 655 12M690 12L705 40 705 70 715 85 740 90 735 118 675 120 667 130 680 155 700 155 710 165 740 170 768 195 780 182 870 178 888 165 890 180 905 190 925 195M608 80L600 110 560 115 545 130 500 125 480 130 485 155 510 160 515 200 505 215 515 220 505 230 495 258 460 232 430 218 425 245 400 252 385 275 415 280 415 300 430 305 420 320 430 330 420 340 420 360 450 375 430 388 395 388 360 345 350 325 335 325 325 360 310 360 295 375 300 400 290 398 285 380 255 372 225 370 205 383 200 370 210 350 190 335 180 350 160 350 145 320 130 298 125 340 100 335 80 365 110 388 125 385 120 395 90 410 85 460 50 465 30 485 20 465 0 470M85 325L95 330 90 340M80 480L75 510 85 520M925 435L900 432 880 450 865 455 880 490 875 520 855 535 830 535 800 525 795 550 780 530 755 565 775 590 765 610 755 612 765 660 700 625 675 635 665 620 670 605 655 595 665 640 680 650 700 665M915 532L905 570 870 600 880 615 905 628 905 640 840 640 850 665 865 675 870 710 880 740 893 745 890 780 880 785 905 808 925 838 875 868M928 520L920 560M755 750L758 770 740 780 740 795 730 820 720 835 700 830 685 790 685 830 695 845 670 855 645 870 640 855 620 840 615 870M455 710L480 755 500 790 515 800 508 868M460 712L500 732 515 760 530 755 545 785 550 790 555 820 590 840 597 868"/>
        </g>
        <g transform="translate(230 425) scale(.33333)">
          <path d="M10 430L12 440M15 552L30 552 35 575 60 585 65 575 95 598 120 580 125 565 135 625 155 595 165 620 200 628 208 602 208 635 245 610 270 595 265 550 245 530 240 500 225 490 280 487 290 470 280 450 290 435 300 455 310 450 340 500 345 465 375 460 390 495 400 485 435 475 430 500 470 495 485 520 510 508 495 535 485 540 495 552 515 540 535 545 530 520 550 540 560 515 580 535 565 490 590 490 620 510 632 480 650 520 670 525 700 520 725 535 750 520 762 498 725 455 728 440 750 450 760 430 790 430 795 410 780 400 782 365 760 340 780 320 785 290 770 270 775 245 750 200 745 190 755 160 765 155 790 180 800 170M425 510L432 520M865 260L858 240 850 225 860 180 870 162 890 175 900 170 915 200"/>
        </g>
        <g transform="translate(530 425) scale(.33333)">
          <path d="M0 180L25 240 40 200 60 240 95 255M510 0L500 20 510 35 515 50 490 55 485 40 450 38 445 80 415 70 420 95 400 120 385 160 330 160 305 118 305 150 280 165 285 180 275 195 295 205 290 225 250 245 215 262 180 230 175 190 160 188 140 230 130 250 130 280 138 310 130 340 115 362 105 360M25 265L30 268M880 0L875 35 885 60 840 60 845 85 800 120 810 160 790 200 785 240 770 260 740 290 718 325 720 350 700 380 680 382 665 400 705 412 712 430 710 445 760 450 775 460 785 480 805 502 845 480 850 470 845 440 868 412 850 405 825 412 830 375 840 350 855 355 860 330 875 340 865 310 885 300 890 275 925 270M595 5L605 25 615 5M640 5L650 10 655 0M925 565L925 605M925 690L905 695 890 690 850 685 820 682 800 710 815 745 825 750 820 770 790 770 770 765 765 795 760 820 790 853M925 655L900 645 925 680M635 853L620 840 640 820 630 805 650 800 645 780 660 770 690 775 700 795 695 810 705 815 718 808 745 845 790 853"/>
        </g>
      </g>
      <g class="streams">
        <g transform="translate(230 140) scale(.33333)">
          <path class="d" d="M158 172L140 200 135 235 120 258 60 275 40 290 35 305 5 305M20 505L10 540M5 685L75 675M495 360L475 390 420 435 385 470 355 495 345 525 310 560 270 590 265 635 230 645 190 670 140 715 110 750 100 775 60 820 55 860 10 860M505 400L440 465 420 530 390 595 345 650 320 690 300 715 240 745 200 785 150 825 75 860M547 425L500 510 480 560 455 620 425 690 400 700 350 720 290 760 230 800 215 840 180 870M525 610L510 660 480 710 430 745 395 790 380 820 340 865 310 870M515 782L440 870M555 790L560 830 540 870M815 195L818 230 790 310 795 390 805 450 830 500 855 560 865 650 875 690 870 800 872 870M900 490L910 430M910 90L912 115M660 15L655 45M735 360L730 385 720 415M775 508L795 535 795 560 780 640 775 710 765 760 770 820M840 500L865 580 865 640"/>
          <path d="M750 200L752 215 738 255M727 285L720 340M735 362L722 415M600 372L655 410M672 430L690 450 685 480M720 440L705 465 705 495M637 473L680 510 700 570 703 605M705 630L725 685M730 710L722 765M670 775L690 815 700 840M720 790L705 815M637 812L660 830 695 835M695 845L715 868 730 870M785 810L775 840 750 868M870 700L915 670M870 710L880 735 865 790"/>
        </g>
        <g transform="translate(530 140) scale(.33333)">
          <path class="d" d="M12 88L12 110 50 170 55 205 85 245 120 265 135 330 140 370 175 385 168 415 215 460 240 490 240 530 300 620 375 690 425 685 450 710 480 745 515 790 550 868M118 12L102 60 110 120 155 160 210 170 250 215 320 245 385 268 450 275 480 315 530 345 540 375 580 390 585 415 610 435M298 12L315 28 355 32 360 95 405 130 400 185 420 195 425 230 440 270M222 258L255 275 270 305 340 330 345 395 370 470 385 530 415 570 410 600 440 630 440 680 455 710M438 410L445 470 435 530 415 565M665 12L655 80 640 95 605 72M730 170L735 240 750 280 800 325 810 370 850 405 860 460 885 500M735 390L720 480 730 545 740 560 780 570 800 602M820 612L870 628 910 638 925 655M532 602L580 645 590 690 625 740 680 780 690 820 710 868M298 765L340 810 362 868M262 830L275 868M102 622L120 680 130 740 140 790 130 820M0 455L15 510 30 580 62 610 65 645 55 655 0 680"/>
          <path d="M0 490L15 520M30 540L25 570M65 610L65 640 30 660 0 685M105 625L110 645M140 750L135 800M130 815L170 868M325 28L355 32M523 12L527 18"/>
        </g>
        <g transform="translate(230 425) scale(.33333)">
          <path class="d" d="M0 0L80 5M178 8L110 75 60 110 40 155 30 195 5 215M350 0L240 75 190 140 160 185 155 215 120 235 110 260 90 295 40 310 0 332M440 8L390 60 335 105 265 150 215 190 180 230 115 255M548 15L510 80 480 145 460 172 420 188 390 250 345 305 320 370 285 430 290 470 310 520 315 560 330 600 360 630 390 655 400 700 400 740 380 800 360 853M455 220L510 250 515 270 562 310 545 385 560 430 570 480 580 510 615 545 600 600 595 730 580 760 585 795 635 820 655 850M572 275L580 300 615 320 625 430 620 480 630 510M640 280L685 325 700 360 720 440 745 465 810 475 840 490 855 510 900 595 915 605M405 377L375 410 370 470 355 580 355 610M455 377L490 430 490 490 480 520 430 550 415 580 410 620 390 655M650 445L660 480 660 510 645 570 655 610 640 635 660 680 680 730 690 800 710 853M755 582L745 680 740 690 775 750 785 790 780 825 765 850M135 490L122 560 115 605 85 650 90 690 105 725 105 830 100 850M15 530L15 570 22 610 10 635M3 678L25 710 30 750 45 775 50 853M475 710L490 735 475 755 510 800 530 853M465 790L465 820 450 850M870 15L860 100 870 190"/>
          <path d="M700 0L720 20 745 35M750 0L748 60 755 140 765 165 775 195M720 108L750 125 755 160M657 52L690 85 695 100M615 130L670 178M577 197L630 195M655 192L690 190 745 197M770 208L795 235 835 310 870 355 890 400M830 290L875 350 880 330 893 310 893 290 885 230 870 185 870 150M870 345L890 400 915 440M875 10L865 60"/>
        </g>
        <g transform="translate(530 425) scale(.33333)">
          <path class="d" d="M68 80L50 170 40 220 65 280 65 330 48 380 45 470M160 0L180 40 160 110 158 190 162 280 215 340 220 370 205 400 190 480 190 530 250 580 280 605 320 640M265 0L305 45 305 140 320 190 400 240 405 300 430 320 470 325 480 355M355 0L375 45 440 75 450 190 530 240 555 270M550 0L580 90 610 140 635 165M710 5L718 80M265 190L305 210 305 370 340 430 345 490 375 520M187 185L185 240 185 300M635 190L685 230 740 240 805 275M755 385L700 420 630 470 620 505 580 515 550 570M0 590L50 650 90 685 135 700 170 680 230 675 260 655 270 690 270 720M155 815L190 815 240 840 300 815 380 853M140 835L155 853M385 590L410 660 412 690M395 585L420 610 430 670 470 675 490 710 540 745 600 755 630 790 680 853M415 695L440 730 500 780 530 820 540 853M665 585L680 650 720 760 740 830 790 850M690 655L740 725 765 730 805 760 860 748 890 775 925 795M840 540L885 570 890 615 925 635M815 580L830 620 850 650 920 680M885 515L925 530M0 430L45 470 80 510 150 520 230 570 270 605"/>
          <path d="M0 430L40 470 70 505 120 515 200 545 250 575 310 630M40 200L40 260M50 360L42 470 50 490M125 480L135 515M185 290L215 330 222 360 205 390 208 450M185 365L210 390M255 488L228 542M230 560L270 600M160 90L158 180 160 275 170 290M185 510L210 550"/>
        </g>
      </g>
      <g class="rivers">
        <path transform="translate(230 140) scale(.33333)" d="M450 172L440 180 395 184 370 195 320 240 295 253 282 280 280 315 258 340 262 365 215 415 205 455 165 500M75 550L3 592M652 55L665 50 685 20 710 12"/>
        <path transform="translate(530 140) scale(.33333)" d="M928 450L903 457 900 480 890 490 892 525 870 550 850 578 820 600 805 615 800 650 828 710 837 760 830 800 775 870"/>
        <path transform="translate(530 425) scale(.33333)" d="M785 0L740 62 710 88 680 120 655 165 630 190 600 235 560 275 545 295 510 325 480 358 415 420 395 470 380 530 375 590 370 605 330 655 318 675 275 720 240 755 205 778 175 785 150 830 105 853M375 590L395 575 430 580 460 593 500 600 545 600 570 582 660 580 715 602 770 595 815 577 840 540 885 510 915 450 928 447"/>
      </g>
      <g class="basin">
        <path transform="translate(230 140) scale(.33333)" d="M557 870L577 818 562 790 545 745 550 725 580 700 620 650 612 612M597 515L585 500 568 488 572 405 548 370 550 350 580 325 600 292 645 268 655 245 670 232 715 145 745 115 775 82 795 77 828 88 835 100 838 170 852 212 870 222 902 278"/>
        <path transform="translate(530 140) scale(.33333)" d="M0 275L16 318 8 340 25 410 35 430 60 448 80 475 88 520 105 560 130 578 148 605 155 645 170 680 203 738 203 775 212 795 208 820 216 870"/>
        <path transform="translate(530 425) scale(.33333)" d="M212 0L225 35 248 72 228 85 218 110 220 165 233 180 230 225 247 265 250 300 258 335 258 378 288 398 290 470 265 510 272 560 298 595 300 625 318 675 305 672 292 635 250 635 215 610 195 600 165 570 130 560 95 545 20 533 0 520"/>
        <path transform="translate(230 425) scale(.33333)" d="M563 0L545 55 530 70 522 100 515 130 515 150 507 190 530 215 595 265 615 262 650 267 680 258 688 265 700 290 722 315 725 345 738 382 765 400 785 395 800 398 828 425 845 470 875 487 902 521"/>
      </g>
      <g class="maplabels">
        <text transform="translate(374 249) rotate(-14)">2000m</text><text transform="translate(262 326) rotate(-25)">1500m</text><text transform="translate(323 329) rotate(-28)">2000m</text><text transform="translate(344 359) rotate(-48)">2000m</text><text transform="translate(473 247) rotate(65)">2000m</text><text transform="translate(429 315) rotate(82)">2000m</text><text transform="translate(706 154) rotate(38)">2000m</text><text transform="translate(765 367) rotate(57)">1500m</text><text transform="translate(496 493) rotate(48)">1500m</text><text transform="translate(560 514) rotate(82)">1500m</text>
      </g>
    </svg>
  </section>
  <section class="styling">
    <div class="dockhead"><h2>Estilo de capas</h2><svg class="dockbtns" viewBox="0 0 26 12"><g fill="#eee" stroke="#666"><rect x=".5" y=".5" width="10.500" height="10.500" rx="2"/><rect x="14.500" y=".5" width="10.500" height="10.500" rx="2"/><rect x="4.500" y="2.500" width="4.500" height="4.500"/><rect x="2.500" y="4.500" width="4.500" height="4.500"/></g><path d="M17 3l6 6M23 3l-6 6" stroke="#555" stroke-width="1.800"/></svg></div>
    <div class="combo"><svg class="poly"><use href="#poly"/></svg><span>copy prov</span><svg class="ar"><use href="#arrow"/></svg></div>
    <div class="stylebody">
      <div class="side"><i class="on"><svg class="faded"><use href="#paint"/></svg></i><div class="darkside"><i class="yellowtag"><svg><use href="#tag"/></svg></i><i class="mask">abc</i><i><svg><use href="#cube"/></svg></i><i><svg><use href="#diagram"/></svg></i><i><svg><use href="#history"/></svg></i></div></div>
      <div class="stylecol">
        <div class="combo second"><svg class="s16"><use href="#rules"/></svg><span>Basado en reglas</span><svg class="ar"><use href="#arrow"/></svg></div>
        <div class="table">
          <div class="thead"><span>Etiqueta</span><span>Regla</span><span>Min. Scale</span><span>Max. Scale</span></div>
          <div class="trow"><span class="lab"><svg class="cb"><use href="#check"/></svg><b class="sw"></b></span><span>(sin filtro)</span></div>
          <div class="trow"><span class="lab"><svg class="cb"><use href="#check"/></svg><b class="sw yellow"></b></span><span class="rule"> "NOMBPROV"  =  'JORGE ...</span></div>
          <div class="hscroll"><i class="l"><svg><use href="#tri"/></svg></i><b></b><i class="r"><svg><use href="#tri"/></svg></i></div>
        </div>
        <div class="btnrow"><button><svg class="s16"><use href="#bigplus"/></svg></button><button class="disabled"><svg class="s16" viewBox="0 0 16 16"><rect x="1.500" y="5.500" width="13" height="5" fill="#fff" stroke="#dfd2cf"/><path d="M4 8h8" stroke="#e2d8d6"/></svg></button><button class="disabled"><svg class="s16" viewBox="0 0 16 16"><path d="M2.500 1.500h11v13h-11z" fill="#f9f9f9" stroke="#ddd"/><path d="M6 13L12 2l2 1-6 10-2.500 1.500z" fill="#ddd" stroke="#ccc"/></svg></button><button><svg class="s16"><use href="#sigma"/></svg></button><button class="levels">Niveles de símbolos...</button></div>
        <button class="refine disabled">Redefinir las reglas seleccionadas<svg class="ar"><use href="#arrow"/></svg></button>
        <div class="render"><svg viewBox="0 0 8 11"><path d="M1 .5v10L7.500 5.500z" fill="#444" stroke="#111"/></svg>Representación de capas</div>
        <div class="applyrow"><button class="un"><svg class="s16"><use href="#undo"/></svg></button><button class="re"><svg class="s16"><use href="#redo"/></svg></button><span class="live"><svg class="cb"><use href="#check"/></svg>Actualización en vivo</span><button class="apply"><svg viewBox="0 0 12 12"><path d="M1 7l3 3.500L11 2" fill="none" stroke="#ddd" stroke-width="2"/></svg>Aplicar</button></div>
      </div>
    </div>
    <div class="tabs"><span class="t1">Navegador</span><span class="t2 current">Estilo de capas</span><span class="t3">Caja de herramientas de Procesos</span></div>
  </section>
</main>

<footer class="status">
  <div class="locator"><svg viewBox="0 0 14 14"><circle cx="5.500" cy="5.500" r="4.300" fill="none" stroke="#888" stroke-width="1.300"/><path d="M8.500 8.500l4 4.500" stroke="#888" stroke-width="1.600"/></svg>Escriba para localizar (Ctrl+K)</div>
  <span class="st coord"><q>Coordenada</q></span><div class="field cval"><q>967259,8073430</q></div>
  <svg class="gps" viewBox="0 0 16 16"><path d="M2 3q1-2 3 0l3 3V2l2-1 2 5 2-1-4 4 3 3-2 3H7L3 10z" fill="#ccc" stroke="#222" stroke-width="1.100"/><path d="M4 4l7 9M3 8l5 6M9 3l1 6" stroke="#222"/></svg>
  <span class="st scale"><q>Escala</q></span><div class="field sval"><q>1:91423</q><b><svg class="ar"><use href="#arrow"/></svg></b></div>
  <svg class="lock" viewBox="0 0 12 15"><path d="M3 7V4q0-3 3-3t3 3v3" fill="none" stroke="#888" stroke-width="1.500"/><rect y="7" width="12" height="8" rx="1" fill="#555"/></svg>
  <span class="st amp"><q>Amplificador</q></span><div class="field aval"><q>100%</q><b class="spin"><svg class="ar upw"><use href="#arrow"/></svg><svg class="ar"><use href="#arrow"/></svg></b></div>
  <span class="st rot"><q>Rotación</q></span><div class="field rval"><q>0.0 °</q><b class="spin"><svg class="ar upw"><use href="#arrow"/></svg><svg class="ar"><use href="#arrow"/></svg></b></div>
  <svg class="cb rcb"><use href="#check"/></svg><span class="st rep"><q>Representar</q></span>
  <svg class="crs" viewBox="0 0 16 16"><circle cx="8" cy="8" r="6.500" fill="none" stroke="#666"/><path d="M1 8h14M8 1.500v13M3 4.500h10M3 11.500h10M6 1.500q-4 6.500 0 13M10 1.500q4 6.500 0 13" fill="none" stroke="#666" stroke-width=".9"/></svg><span class="st epsg"><q>EPSG:32718</q></span>
  <svg class="msg" viewBox="0 0 16 16"><path d="M8 1q7.500 0 7.500 5.500 0 3-2 4.200l1 3.800-4-2.500Q.5 13 .5 6.500 .5 1 8 1z" fill="#4d4d4d"/><circle cx="4.500" cy="6.500" r="1" fill="#fff"/><circle cx="8" cy="6.500" r="1" fill="#fff"/><circle cx="11.500" cy="6.500" r="1" fill="#fff"/></svg>
</footer>

<div class="dropdown">
  <div class="mi"><i></i>Perfiles de <u>u</u>suario<svg class="sub"><use href="#tri"/></svg></div>
  <div class="mi hot"><i><svg><use href="#style"/></svg></i>Administrador de estilos...</div>
  <div class="mi"><i><svg><use href="#globegold"/></svg></i>Proyecciones personalizadas...</div>
  <hr>
  <div class="mi"><i><svg><use href="#keys"/></svg></i>Atajos de teclado...</div>
  <div class="mi"><i><svg><use href="#panel"/></svg></i>Personalización de la interfaz...</div>
  <hr>
  <div class="mi"><i><svg><use href="#wrench"/></svg></i><span><u>O</u>pciones...</span></div>
</div>
<svg class="cursor" viewBox="0 0 14 20"><path d="M1 1v15l3.500-3.200 2.500 6 3-1.300-2.500-5.700H12.500z" fill="#fff" stroke="#000" stroke-width="1.300"/></svg>
<script src="map.js"></script>
</body>
</html>
```

FILE: map.js
```js
// Turns the coarse vertex lists of the contour and stream layers into meandering lines.
function noise(x, y) {
  return Math.sin(x * 0.11 + Math.sin(y * 0.07) * 2.3) * 0.6 + Math.sin(y * 0.19 + x * 0.05 + 1.7) * 0.4;
}

function meander(path, amplitude, step) {
  const probe = document.createElementNS('http://www.w3.org/2000/svg', 'path');
  const parts = path.getAttribute('d').split('M').filter(Boolean);
  const out = parts.map(function (part) {
    probe.setAttribute('d', 'M' + part);
    const length = probe.getTotalLength();
    const count = Math.max(2, Math.round(length / step));
    const points = [];
    for (let k = 0; k <= count; k++) {
      const p = probe.getPointAtLength(length * k / count);
      points.push([p.x + noise(p.x, p.y) * amplitude, p.y + noise(p.y + 300, p.x + 90) * amplitude]);
    }
    let d = 'M' + points[0].map(Math.round).join(' ');
    for (let k = 1; k < points.length - 1; k++) {
      const a = points[k], b = points[k + 1];
      d += 'Q' + a[0].toFixed(1) + ' ' + a[1].toFixed(1) + ' ' + ((a[0] + b[0]) / 2).toFixed(1) + ' ' + ((a[1] + b[1]) / 2).toFixed(1);
    }
    const last = points[points.length - 1];
    return d + 'L' + last[0].toFixed(1) + ' ' + last[1].toFixed(1);
  });
  path.setAttribute('d', out.join(''));
}

document.querySelectorAll('.faint path').forEach(function (p) { meander(p, 10, 10); });
document.querySelectorAll('.contour path').forEach(function (p) { meander(p, 2.5, 7); });
document.querySelectorAll('.streams path').forEach(function (p) { meander(p, 2, 11); });
document.querySelectorAll('.rivers path, .basin path').forEach(function (p) { meander(p, 0.8, 8); });
```

FILE: styles.css
```css
* { box-sizing: border-box; }
body { margin: 0; width: 1360px; height: 741px; overflow: hidden; position: relative; display: flex; flex-direction: column; background: #eee; color: #1b1e20; font: 11px/18px "Noto Sans", sans-serif; }
i, em, s { font-style: normal; text-decoration: none; }
u { text-decoration: underline; text-underline-offset: 3px; text-decoration-thickness: 1px; text-decoration-skip-ink: none; }
q { quotes: none; display: inline-block; transform: scaleX(.86); transform-origin: 0 50%; white-space: nowrap; }
svg { display: block; flex: none; }
h2 { margin: 0; font-size: 11px; font-weight: 400; }
button { font: inherit; color: inherit; padding: 0; border: 1px solid #b3b3b3; border-radius: 3px; background: linear-gradient(#fdfdfd, #efefef); display: flex; align-items: center; justify-content: center; white-space: nowrap; }
.defs { position: absolute; }
.s16 { width: 16px; height: 16px; }
.cb { width: 14px; height: 14px; }
.poly { width: 16px; height: 12px; }
.ar { width: 8px; height: 5px; color: #555; }

.titlebar { height: 28px; background: #000; border-top: 1px solid #333; display: grid; grid-template-columns: 1fr auto; align-items: center; }
.title { grid-area: 1 / 1 / 2 / 3; text-align: center; color: #fff; font-weight: 700; font-size: 12.200px; padding-right: 59px; }
.winbtns { grid-area: 1 / 2; display: flex; gap: 8px; padding-right: 1px; }
.winbtns i { width: 14px; height: 14px; border-radius: 50%; }
.orange { background: #f57900; }
.blue { background: #3a7df5; }
.red { background: #d61a1a; }

.menubar { height: 21px; display: flex; padding-left: 2.500px; border-bottom: 1px solid #d2d2d2; }
.menubar span { padding: 0 4px; margin: 0 3.300px; line-height: 21px; height: 20px; }
.menubar .active { background: #308cc6; color: #eee; box-shadow: 0 0 0 1px #2a7aad inset; height: 21px; }

.toolbar { height: 31px; display: flex; align-items: center; background: linear-gradient(#f8f8f8, #ececec); border-bottom: 1px solid #b8b8b8; flex: none; }
.toolbar > i { width: 25px; height: 25px; display: flex; align-items: center; justify-content: center; flex: none; position: relative; }
.toolbar > i svg { width: 16px; height: 16px; }
.toolbar em, .layertools em { width: 12px; display: flex; justify-content: center; flex: none; color: #444; }
.toolbar em svg, .layertools em svg { width: 8px; height: 5px; }
.off { color: #c8c8c8 !important; }
.grip { width: 16px; height: 18px; flex: none; background: radial-gradient(circle, #b9b9b9 .8px, transparent 1px) 6px 0 / 3px 3px repeat-y, radial-gradient(circle, #b9b9b9 .8px, transparent 1px) 9px 0 / 3px 3px repeat-y; }
.grip.first { width: 12.500px; background-position: 4px 0, 7px 0; }
.pressed { background: #ddd; border: 1px solid #999; border-radius: 3px; }
.rest { flex: none; }
.r1 { width: 226px; }
.r2 { width: 265px; }
.vsep { width: 8px; height: 12px; flex: none; background: linear-gradient(#c8c8c8, #c8c8c8) center / 1px 100% no-repeat; }
.vsep.narrow { width: 6px; }
.brownish { color: #d6cbc6; }
.greenish { color: #c9cfca; }
.tag { color: #d9d9d3; }
.toolbar > .tag svg { width: 15px; height: 11px; margin-top: -4px; }
.tag-text { font: 700 6.500px "Noto Sans", sans-serif; fill: #555; }
.bluetag { color: #b5d4f2; }
.redtag { color: #ff6262; }
.tag:not(.bluetag):not(.redtag) svg { opacity: .5; }
.dot { position: absolute; right: 3px; bottom: 3px; width: 6px; height: 6px; border-radius: 50%; background: #b71c1c; }
.dot.gray { background: #c2baba; }
.mark { position: absolute; right: 2px; bottom: 3px; font-size: 7px; line-height: 7px; color: #bbb; width: 7px; text-align: center; }
.mark.box { background: #c4c4c4; color: #fff; font-weight: 700; }
.geocode { height: 24px; width: 400px; border: 1px solid #b3b3b3; border-radius: 2px; background: #fff; color: #888; padding: 3px 3px; }

main { height: 569px; display: flex; flex: none; }
.layers { width: 224px; display: flex; flex-direction: column; padding-top: 2px; }
.layers h2 { padding-left: 4px; }
.layertools { height: 31px; display: flex; align-items: center; padding-left: 4px; }
.layertools i { width: 25px; display: flex; justify-content: center; }
.layertools i svg { width: 16px; height: 16px; }
.layertools .pressed2 { width: 24px; height: 24px; align-items: center; border: 1px solid #aaa; border-radius: 3px; background: #ddd; }
.tree { list-style: none; margin: 0; padding: 0; flex: 1; background: #fff; border: 1px solid #b3b3b3; }
.tree li { height: 18px; display: flex; align-items: center; }
.tree li > i { width: 23px; padding-left: 8px; flex: none; }
.tree li > i svg { width: 5px; height: 8px; }
.tree strong { color: #000; }
.sym { width: 28px; display: flex; padding-left: 6px; flex: none; }
.sym.narrow { width: 26px; }
.copysym { width: 25px; }
.redbox { width: 16px; height: 16px; border: 1.500px solid #f33; background: #fff; }
.line { width: 16px; height: 2px; background: #9090ff; }
.l2 { background: linear-gradient(90deg, #9090ff 40%, #fff 40% 50%, #9090ff 50% 80%, #fff 80% 88%, #9090ff 88%); }
.l3 { background: #4848ff; }
.tree .dim { color: #858585; font-style: italic; }
.sel { flex: 1; height: 18px; line-height: 16px; padding-left: 2px; background: #e4eff7; border: 1px solid #bedcef; border-radius: 2px; }
.split { width: 6px; background: radial-gradient(circle, #ccc .8px, transparent 1px) 1px 280px / 4px 4px no-repeat; }

.mapframe { width: 610px; height: 569px; padding-top: 1px; flex: none; }
.map { width: 610px; height: 568px; background: #fff; border: 1px solid #b3b3b3; }
.map path { fill: none; stroke-linejoin: round; }
.faint path { stroke: #e9d6cf; stroke-width: 2.500; }
.contour path { stroke: #a8742a; stroke-width: 3.100; }
.streams path { stroke: #2020f2; stroke-width: 3.300; }
.streams .d { stroke-dasharray: 21 9; }
.rivers path { stroke: #0808f8; stroke-width: 5.400; }
.basin path { stroke: #fa1408; stroke-width: 8; stroke-linecap: round; }
.maplabels text { font: 8px "Noto Sans", sans-serif; fill: #111; stroke: #fff; stroke-width: 2px; paint-order: stroke; }

.styling { flex: 1; display: flex; flex-direction: column; padding: 2px 3px 0 9px; min-width: 0; }
.dockhead { display: flex; justify-content: space-between; align-items: center; height: 18px; padding-left: 1px; }
.dockbtns { width: 26px; height: 12px; margin-right: -2px; }
.combo { height: 24px; margin-top: 3px; flex: none; display: flex; align-items: center; gap: 4px; padding: 0 7px 0 5px; border: 1px solid #b3b3b3; border-radius: 3px; background: linear-gradient(#fdfdfd, #efefef); }
.combo .ar { margin-left: auto; }
.combo .poly { margin-right: -1px; }
.stylebody { display: flex; gap: 3px; height: 487px; margin-top: 4px; flex: none; }
.side { width: 38px; display: flex; flex-direction: column; }
.side i { height: 24px; width: 24px; display: flex; align-items: center; justify-content: center; }
.side i svg { width: 16px; height: 16px; }
.side .on { height: 26px; width: 28px; }
.faded { opacity: .65; }
.darkside { flex: 1; background: #5c5c5c; }
.darkside svg { opacity: .9; }
.yellowtag { color: #f4dd35; }
.side .yellowtag svg { height: 12px; }
.mask { font-weight: 700; font-size: 8.500px; color: #567; text-shadow: 0 0 1px #fff, 1px 0 1px #fff, -1px 0 1px #fff, 0 1px 1px #fff, 0 -1px 1px #fff; }
.stylecol { flex: 1; min-width: 0; }
.combo.second { margin-top: 2px; }
.table { margin-top: 6px; height: 337px; background: #fff; border: 1px solid #b3b3b3; display: flex; flex-direction: column; margin-top: 11px; }
.thead, .trow { display: grid; grid-template-columns: 150px 150px 100px 1fr; flex: none; }
.thead { height: 20px; margin-top: -5px; background: linear-gradient(#fdfdfd, #ececec); border-bottom: 1px solid #b3b3b3; border-top: 1px solid #b3b3b3; }
.thead span { padding: 0 2px; line-height: 19px; border-right: 1px solid #c8c8c8; white-space: nowrap; }
.thead span:last-child { border: 0; }
.trow { height: 18px; }
.trow > span { padding-left: 3px; white-space: pre; line-height: 16px; }
.trow .lab { display: flex; align-items: center; padding: 1px 0 0 23px; gap: 6px; }
.sw { width: 16px; height: 16px; border: 1px solid #eee; }
.sw.yellow { background: #efff00; border-color: #8b941b; }
.hscroll { margin-top: auto; height: 15px; display: flex; background: #e2e2e2; border-top: 1px solid #b3b3b3; }
.hscroll i { width: 14px; display: flex; align-items: center; justify-content: center; background: #f8f8f8; }
.hscroll i svg { width: 5px; height: 8px; }
.hscroll .l { transform: scaleX(-1); border-left: 1px solid #b3b3b3; }
.hscroll .r { margin-left: auto; border-left: 1px solid #b3b3b3; }
.hscroll b { width: 288px; background: #f8f8f8; border-right: 1px solid #b3b3b3; }
.btnrow { display: flex; gap: 6px; margin-top: 5px; }
.btnrow button { width: 28px; height: 24px; }
.btnrow .levels { width: 120px; margin-left: auto; }
.disabled { border-color: #d0d0d0 !important; color: #bbb; }
.refine { width: 193px; height: 24px; margin-top: 6px; gap: 5px; }
.refine .ar { color: #c5c5c5; width: 6px; }
.render { display: flex; align-items: center; height: 18px; margin-top: 6px; padding-left: 4px; gap: 9px; font-weight: 700; color: #000; }
.render svg { width: 8px; height: 11px; }
.applyrow { display: flex; align-items: center; margin-top: 5px; }
.applyrow button { width: 24px; height: 24px; }
.applyrow .re { margin-left: 6px; color: #6faa78; }
.applyrow .un { color: #e3773a; }
.live { margin-left: auto; display: flex; gap: 5px; align-items: center; }
.applyrow .apply { width: 80px; margin-left: 13px; gap: 3px; }
.apply svg { width: 12px; height: 12px; }
.tabs { display: flex; margin: 4px -3px 0 -3px; height: 26px; border-top: 1px solid #b3b3b3; align-items: flex-start; flex: none; }
.tabs span { height: 24px; line-height: 23px; text-align: center; background: #dcdcdc; border: 1px solid #b3b3b3; border-top: 0; border-radius: 0 0 3px 3px; white-space: nowrap; }
.tabs .t1 { width: 82px; }
.tabs .t2 { width: 101px; }
.tabs .t3 { width: 199px; border-left: 0; padding-right: 24px; padding-left: 12px; }
.tabs .current { background: #f6f6f6; height: 26px; line-height: 26px; margin-top: -1px; border-left: 0; }

.status { height: 30px; display: flex; align-items: center; padding-left: 4px; font-size: 9.300px; }
.status > * { flex: none; }
.locator { width: 270px; height: 24px; border: 1px solid #b3b3b3; border-radius: 3px; background: #fff; display: flex; align-items: center; gap: 6px; padding-left: 8px; color: #888; font-size: 12px; }
.locator svg { width: 14px; height: 14px; }
.coord { width: 50px; margin-left: 310px; }
.field { height: 22px; border: 1px solid #b3b3b3; border-radius: 2px; background: #fff; padding-left: 4px; line-height: 20px; display: flex; justify-content: space-between; }
.field b { width: 19px; border-left: 1px solid #c5c5c5; display: flex; flex-direction: column; align-items: center; justify-content: center; gap: 4px; }
.field .spin { width: 14px; }
.upw { transform: scaleY(-1); }
.cval { width: 83px; padding-left: 9px; }
.gps { width: 15px; height: 16px; margin-left: 4px; }
.scale { width: 27px; margin-left: 14px; }
.sval { width: 81px; }
.lock { width: 12px; height: 15px; margin-left: 12px; }
.amp { width: 52px; margin-left: 9px; }
.aval { width: 88px; }
.rot { width: 42px; margin-left: 9px; }
.rval { width: 84px; }
.rcb { margin-left: 6px; }
.rep { margin-left: 5px; width: 50px; }
.crs { width: 16px; height: 16px; margin-left: 12px; }
.epsg { margin-left: 2px; width: 46px; }
.msg { width: 17px; height: 17px; margin-left: 20px; }

.dropdown { position: absolute; left: 190px; top: 49px; width: 257px; height: 148px; background: #fff; border: 1px solid #999; box-shadow: 1px 5px 12px rgba(0,0,0,.4); color: #111; }
.mi { height: 24px; display: flex; align-items: center; white-space: pre; }
.mi:first-child { height: 23px; }
.mi i { width: 27px; padding-left: 6px; }
.mi i svg { width: 16px; height: 16px; }
.mi .sub { width: 5px; height: 8px; margin-left: auto; margin-right: 5px; }
.hot { background: #308cc6; color: #eee; box-shadow: 0 1px #2a7aad inset, 0 -1px #2a7aad inset; }
.dropdown hr { margin: 0 4px 1px; border: 0; height: 1px; background: #bbb; }
.cursor { position: absolute; left: 346px; top: 89px; width: 14px; height: 20px; }
```
